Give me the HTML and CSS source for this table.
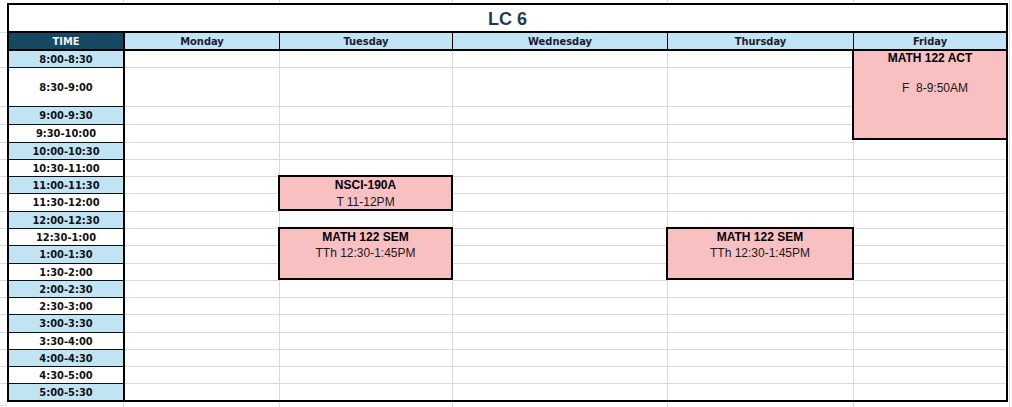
FILE: index.html
```html
<!DOCTYPE html>
<html>
<head>
<meta charset="utf-8">
<link rel="stylesheet" href="styles.css">
</head>
<body>
<div class="sheet">
  <div class="table">
    <div class="title">LC 6</div>
    <div class="hd hd-time">TIME</div>
    <div class="hd">Monday</div>
    <div class="hd">Tuesday</div>
    <div class="hd">Wednesday</div>
    <div class="hd">Thursday</div>
    <div class="hd hd-last">Friday</div>

    <div class="tc blue">8:00-8:30</div><div class="c"></div><div class="c"></div><div class="c"></div><div class="c"></div>
    <div class="tc">8:30-9:00</div><div class="c"></div><div class="c"></div><div class="c"></div><div class="c"></div>
    <div class="tc blue">9:00-9:30</div><div class="c"></div><div class="c"></div><div class="c"></div><div class="c"></div>
    <div class="tc">9:30-10:00</div><div class="c"></div><div class="c"></div><div class="c"></div><div class="c"></div>
    <div class="tc blue">10:00-10:30</div><div class="c"></div><div class="c"></div><div class="c"></div><div class="c"></div><div class="c last"></div>
    <div class="tc">10:30-11:00</div><div class="c"></div><div class="c"></div><div class="c"></div><div class="c"></div><div class="c last"></div>
    <div class="tc blue">11:00-11:30</div><div class="c"></div><div class="c"></div><div class="c"></div><div class="c last"></div>
    <div class="tc">11:30-12:00</div><div class="c"></div><div class="c"></div><div class="c"></div><div class="c last"></div>
    <div class="tc blue">12:00-12:30</div><div class="c"></div><div class="c"></div><div class="c"></div><div class="c"></div><div class="c last"></div>
    <div class="tc">12:30-1:00</div><div class="c"></div><div class="c"></div><div class="c last"></div>
    <div class="tc blue">1:00-1:30</div><div class="c"></div><div class="c"></div><div class="c last"></div>
    <div class="tc">1:30-2:00</div><div class="c"></div><div class="c"></div><div class="c last"></div>
    <div class="tc blue">2:00-2:30</div><div class="c"></div><div class="c"></div><div class="c"></div><div class="c"></div><div class="c last"></div>
    <div class="tc">2:30-3:00</div><div class="c"></div><div class="c"></div><div class="c"></div><div class="c"></div><div class="c last"></div>
    <div class="tc blue">3:00-3:30</div><div class="c"></div><div class="c"></div><div class="c"></div><div class="c"></div><div class="c last"></div>
    <div class="tc">3:30-4:00</div><div class="c"></div><div class="c"></div><div class="c"></div><div class="c"></div><div class="c last"></div>
    <div class="tc blue">4:00-4:30</div><div class="c"></div><div class="c"></div><div class="c"></div><div class="c"></div><div class="c last"></div>
    <div class="tc">4:30-5:00</div><div class="c"></div><div class="c"></div><div class="c"></div><div class="c"></div><div class="c last"></div>
    <div class="tc blue tc-end">5:00-5:30</div><div class="c end"></div><div class="c end"></div><div class="c end"></div><div class="c end"></div><div class="c last end"></div>

    <div class="ev ev-fri">
      <div class="ev-title">MATH 122 ACT</div>
      <div class="ev-sub ev-sub-fri">F  8-9:50AM</div>
    </div>
    <div class="ev ev-nsci">
      <div class="ev-title">NSCI-190A</div>
      <div class="ev-sub">T 11-12PM</div>
    </div>
    <div class="ev ev-sem ev-tue">
      <div class="ev-title">MATH 122 SEM</div>
      <div class="ev-sub">TTh 12:30-1:45PM</div>
    </div>
    <div class="ev ev-sem ev-thu">
      <div class="ev-title">MATH 122 SEM</div>
      <div class="ev-sub">TTh 12:30-1:45PM</div>
    </div>
  </div>
</div>
</body>
</html>
```

FILE: styles.css
```css
html, body {
  margin: 0;
  padding: 0;
  background: #ffffff;
}

.sheet {
  width: 1012px;
  height: 407px;
  box-sizing: border-box;
  padding: 3px 0 0 7px;
  overflow: hidden;
  background-image:
    linear-gradient(#dadada, #dadada), linear-gradient(#dadada, #dadada),
    linear-gradient(#dadada, #dadada), linear-gradient(#dadada, #dadada),
    linear-gradient(#dadada, #dadada), linear-gradient(#dadada, #dadada),
    linear-gradient(#dadada, #dadada), linear-gradient(#dadada, #dadada),
    linear-gradient(#dadada, #dadada), linear-gradient(#dadada, #dadada),
    linear-gradient(#dadada, #dadada), linear-gradient(#dadada, #dadada),
    linear-gradient(#dadada, #dadada), linear-gradient(#dadada, #dadada),
    linear-gradient(#dadada, #dadada), linear-gradient(#dadada, #dadada),
    linear-gradient(#dadada, #dadada), linear-gradient(#dadada, #dadada),
    linear-gradient(#dadada, #dadada), linear-gradient(#dadada, #dadada),
    linear-gradient(#dadada, #dadada), linear-gradient(#dadada, #dadada),
    linear-gradient(#dadada, #dadada), linear-gradient(#dadada, #dadada),
    linear-gradient(#dadada, #dadada), linear-gradient(#dadada, #dadada);
  background-repeat: no-repeat;
  background-size:
    1px 407px, 1px 407px, 1px 407px, 1px 407px, 1px 407px, 1px 407px,
    7px 1px, 7px 1px, 7px 1px, 7px 1px, 7px 1px, 7px 1px, 7px 1px,
    7px 1px, 7px 1px, 7px 1px, 7px 1px, 7px 1px, 7px 1px, 7px 1px,
    7px 1px, 7px 1px, 7px 1px, 7px 1px, 7px 1px, 7px 1px;
  background-position:
    123px 0, 279px 0, 452px 0, 667px 0, 853px 0, 1009px 0,
    0 32px, 0 67px, 0 106px, 0 124px, 0 142px, 0 159px, 0 176px,
    0 193px, 0 211px, 0 228px, 0 245px, 0 263px, 0 280px, 0 297px,
    0 314px, 0 332px, 0 349px, 0 366px, 0 383px, 0 405px;
}

.table {
  display: grid;
  width: 1001px;
  box-sizing: border-box;
  border: 2px solid #000;
  background: #fff;
  grid-template-columns: 116px 155px 173px 215px 186px 152px;
  grid-template-rows:
    28px 18px
    17px 39px 18px 18px 17px 17px 17px 18px 17px 17px
    18px 17px 17px 17px 18px 17px 17px 17px 16px;
}

.title {
  grid-column: 1 / -1;
  border-bottom: 2px solid #000;
  display: flex;
  align-items: center;
  justify-content: center;
  font-family: "Liberation Sans", Arial, sans-serif;
  font-weight: bold;
  font-size: 18px;
  color: #1f3a56;
  padding-top: 2px;
  box-sizing: border-box;
}

.hd {
  box-sizing: border-box;
  background: #c1e4f4;
  border-bottom: 2px solid #000;
  border-right: 1px solid #000;
  display: flex;
  align-items: center;
  justify-content: center;
  font-family: "DejaVu Sans Condensed", "DejaVu Sans", sans-serif;
  font-weight: bold;
  font-size: 11px;
  color: #1c1c30;
  line-height: 1;
}

.hd-time {
  background: #174862;
  color: #eef4f8;
  border-right: 2px solid #000;
}

.hd-last {
  border-right: none;
}

.tc {
  box-sizing: border-box;
  background: #fff;
  border-right: 2px solid #000;
  border-bottom: 1px solid #111;
  display: flex;
  align-items: center;
  justify-content: center;
  font-family: "DejaVu Sans Condensed", "DejaVu Sans", sans-serif;
  font-weight: bold;
  font-size: 11px;
  color: #111;
  line-height: 1;
}

.tc.blue {
  background: #c1e4f4;
}

.tc-end {
  border-bottom: none;
}

.c {
  box-sizing: border-box;
  background: #fff;
  border-right: 1px solid #dadada;
  border-bottom: 1px solid #dadada;
}

.c.last {
  border-right: none;
}

.c.end {
  border-bottom: none;
}

.ev {
  z-index: 1;
  box-sizing: border-box;
  background: #f8c0c0;
  border: 2px solid #000;
  margin: -2px 0 1px -2px;
  text-align: center;
  font-family: "Liberation Sans", Arial, sans-serif;
  font-size: 12px;
  color: #1a1a1a;
}

.ev-title {
  font-weight: bold;
  color: #000;
  line-height: 17px;
}

.ev-sub {
  line-height: 17px;
  white-space: pre;
}

.ev-fri {
  grid-column: 6;
  grid-row: 3 / span 4;
  margin: -2px -2px 3px -2px;
}

.ev-fri .ev-title {
  line-height: 15px;
}

.ev-sub-fri {
  margin-top: 15px;
  line-height: 15px;
  padding-left: 10px;
}

.ev-nsci {
  grid-column: 3;
  grid-row: 9 / span 2;
}

.ev-sem {
  grid-row: 12 / span 3;
}

.ev-sem .ev-title {
  line-height: 16px;
}

.ev-tue {
  grid-column: 3;
}

.ev-thu {
  grid-column: 5;
}
```
